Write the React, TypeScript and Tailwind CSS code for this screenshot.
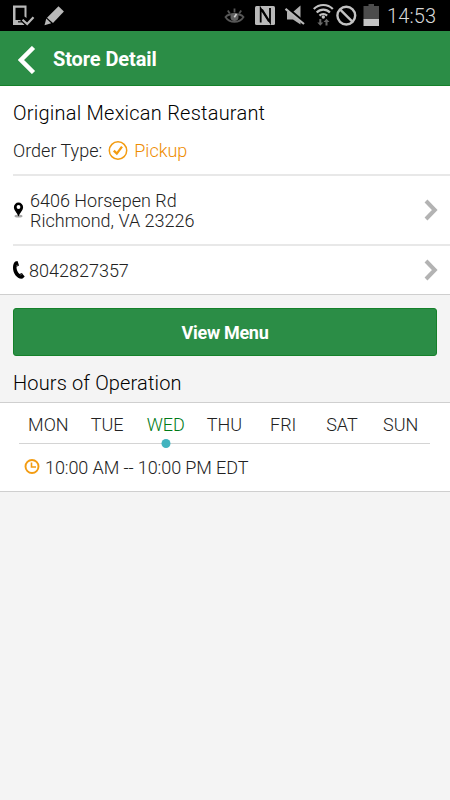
import { useState } from "react";

const DAYS = ["MON", "TUE", "WED", "THU", "FRI", "SAT", "SUN"];

const STORE = {
  name: "Original Mexican Restaurant",
  street: "6406 Horsepen Rd",
  city: "Richmond, VA 23226",
  phone: "8042827357",
  hours: "10:00 AM -- 10:00 PM EDT",
};

function StatusBar() {
  return (
    <div className="flex h-[31px] items-center justify-between bg-black">
      <svg width="70" height="31" viewBox="0 0 70 31" fill="none">
        <path d="M13 5.500h13.500V18l-2-1.500V7.800H15.500V20h5l4.500 5H13z" fill="#b9b9b9" />
        <path d="M18 21.800h4" stroke="#222" strokeWidth="1.400" />
        <path d="M21.500 19.500l5.700 5.500 7-7.500" stroke="#000" strokeWidth="3.500" />
        <path d="M22.500 19.800l4.700 4.200 6.300-6.800" stroke="#b9b9b9" strokeWidth="2.200" />
        <path d="M58.500 6.300l5.400 5.300-10.900 11.400-6-5.300z" fill="#b9b9b9" />
        <path d="M46.300 18.600l4.900 4.600-6.700 2z" fill="#b9b9b9" />
      </svg>
      <div className="flex items-center">
        <svg width="164" height="31" viewBox="220 0 164 31" fill="none">
          <g stroke="#565656" strokeWidth="1.800">
            <path d="M225.500 17c3.500-4 14.500-4 18 0-4 6.500-14 6.500-18 0z" />
            <path d="M234.500 8.500v4M227.800 10.500l2 3M241.200 10.500l-2 3" />
          </g>
          <circle cx="234.500" cy="17" r="4" fill="#606060" />
          <path d="M234.300 17.300l2.200-3.300" stroke="#d0d0d0" strokeWidth="1.600" />
          <rect x="255" y="6" width="20" height="19" rx="1.500" fill="#b9b9b9" />
          <path d="M260.700 22.500V8.500L269 21.500" stroke="#000" strokeWidth="1.800" />
          <path d="M270 8v14.200L262 9.500" stroke="#000" strokeWidth="1.800" />
          <path d="M287 12h6l7.500-6.500v19L293 19.500h-6z" fill="#b0b0b0" />
          <path d="M285.500 7.200l19 15.800" stroke="#000" strokeWidth="3.500" />
          <path d="M285.500 8.800l18.500 15.200" stroke="#b9b9b9" strokeWidth="2.200" />
          <g stroke="#c2c2c2" strokeWidth="2.200">
            <path d="M313.800 9c5.300-5.300 13.800-5.300 19 0" />
            <path d="M316.700 12.400c3.700-3.800 9.500-3.800 13.200 0" />
            <path d="M319.500 15.600c2.200-2 5.400-2 7.600 0" />
          </g>
          <circle cx="323.300" cy="17" r="1.700" fill="#c2c2c2" />
          <g fill="#686868">
            <path d="M319.300 19h2v3.500h2l-3 3.200-3-3.200h2z" />
            <path d="M325.500 25.500h2V22h2l-3-3.200-3 3.200h2z" />
          </g>
          <circle cx="346.300" cy="15.600" r="8.900" stroke="#c2c2c2" strokeWidth="2.400" />
          <path d="M340 9.300l12.600 12.600" stroke="#c2c2c2" strokeWidth="2.400" />
          <path d="M368.500 4h5.500v2h5v13.500h-15.500V6h5z" fill="#4c4c4c" />
          <path d="M363.500 19h15.500v7h-15.500z" fill="#c4c4c4" />
        </svg>
        <span className="w-[66px] pl-[3px] pt-px text-[20px] font-light leading-[31px] tracking-[0.1px] text-[#d8d8d8]">14:53</span>
      </div>
    </div>
  );
}

function Chevron() {
  return (
    <svg width="14" height="22" viewBox="0 0 14 22" fill="none" className="shrink-0">
      <path d="M2 2l8.800 9L2 20" stroke="#b3b3b3" strokeWidth="4" />
    </svg>
  );
}

function PinIcon() {
  return (
    <svg width="12" height="16" viewBox="0 0 12 16">
      <ellipse cx="5.500" cy="14.200" rx="4" ry="1.400" fill="#a8a8a8" />
      <path d="M5.500 0.500a4.600 4.600 0 0 0-4.600 4.700C.9 8.200 4 10.500 5.500 14.500 7 10.500 10.100 8.200 10.100 5.200A4.600 4.600 0 0 0 5.500.5z" fill="#000" />
      <circle cx="5.500" cy="5" r="1.900" fill="#fff" />
    </svg>
  );
}

function PhoneIcon() {
  return (
    <svg width="12" height="18" viewBox="0 0 12 18">
      <path d="M2.300.5L4.500 0l1.600 4.400-2.600 1.300c0 3 .9 5.300 3 7.400l2.200-1 3 3.400-2 2.100C4.200 18.500 0 12.500 0 6.800 0 4 .8 1.700 2.300.5z" fill="#000" />
      <path d="M3 5l2.600-1.200M7.200 14.200l2.200-1.600" stroke="#777" strokeWidth=".7" />
    </svg>
  );
}

export default function App() {
  const [day, setDay] = useState("WED");

  return (
    <div className="min-h-screen bg-[#f4f4f4] font-[Roboto,sans-serif] font-light text-[#222]">
      <StatusBar />
      <header className="flex h-[55px] items-center border-b border-[#15812a] bg-[#2b8d46] pl-[18px]">
        <svg width="18" height="28" viewBox="0 0 18 28" fill="none" className="mt-1">
          <path d="M15.500 1.500L3 14l12.500 12.500" stroke="#fff" strokeWidth="4.500" />
        </svg>
        <h1 className="ml-[17px] mt-0.5 text-[20px] font-bold tracking-[-0.1px] text-white">Store Detail</h1>
      </header>

      <section className="h-[209px] border-b border-[#cfcfcf] bg-white pl-[13px]">
        <div className="h-[90px] border-b-2 border-[#e8e8e8] pt-[12px]">
          <h2 className="text-[20px] leading-[30px] tracking-[0.23px] text-black">{STORE.name}</h2>
          <div className="mt-[10px] flex items-center text-[18px] leading-[26px]">
            <span>Order Type:</span>
            <svg width="20" height="20" viewBox="0 0 20 20" fill="none" className="ml-[6px] mr-[6px]">
              <circle cx="10" cy="9.500" r="8.700" stroke="#f39c12" strokeWidth="1.500" />
              <path d="M5.800 9.600l3 3 5.200-7" stroke="#f39c12" strokeWidth="2.300" />
            </svg>
            <span className="text-[#ee8c00]">Pickup</span>
          </div>
        </div>
        <div className="flex h-[70px] items-center border-b-2 border-[#e8e8e8] pr-3">
          <PinIcon />
          <address className="ml-[5px] flex-1 pt-0.5 text-[18px] not-italic leading-[20.500px]">
            {STORE.street}
            <br />
            {STORE.city}
          </address>
          <Chevron />
        </div>
        <div className="flex h-[48px] items-center pr-3">
          <PhoneIcon />
          <span className="ml-[4px] flex-1 text-[18px]">{STORE.phone}</span>
          <Chevron />
        </div>
      </section>

      <div className="px-[13px] pt-[13px]">
        <button className="h-[48px] w-full rounded-[3px] border border-[#15812a] bg-[#2b8d46] text-[18px] font-bold tracking-[-0.3px] text-white">
          View Menu
        </button>
        <h2 className="mt-[12px] h-[34px] text-[20px] leading-[31px] tracking-[0.15px] text-black">Hours of Operation</h2>
      </div>

      <section className="h-[90px] border-y border-[#cfcfcf] bg-white">
        <div className="ml-[19px] flex h-[41px] w-[411px] border-b border-[#d4d4d4]">
          {DAYS.map((d) => (
            <button
              key={d}
              onClick={() => setDay(d)}
              className={`relative flex-1 pt-0.5 text-[18px] ${d === day ? "text-[#007a18]" : "text-[#222]"}`}
            >
              {d}
              {d === day && (
                <span className="absolute -bottom-[5px] left-1/2 size-[9px] -translate-x-1/2 rounded-full bg-[#42b4bf]" />
              )}
            </button>
          ))}
        </div>
        <div className="flex h-[46px] items-center pl-[24px]">
          <svg width="16" height="16" viewBox="0 0 16 16" fill="none">
            <circle cx="8" cy="7.500" r="6.500" stroke="#f39c12" strokeWidth="1.900" />
            <path d="M7.500 3.500V8H12" stroke="#f39c12" strokeWidth="1.600" />
          </svg>
          <span className="ml-[5px] text-[18px] tracking-[-0.1px]">{STORE.hours}</span>
        </div>
      </section>
    </div>
  );
}
